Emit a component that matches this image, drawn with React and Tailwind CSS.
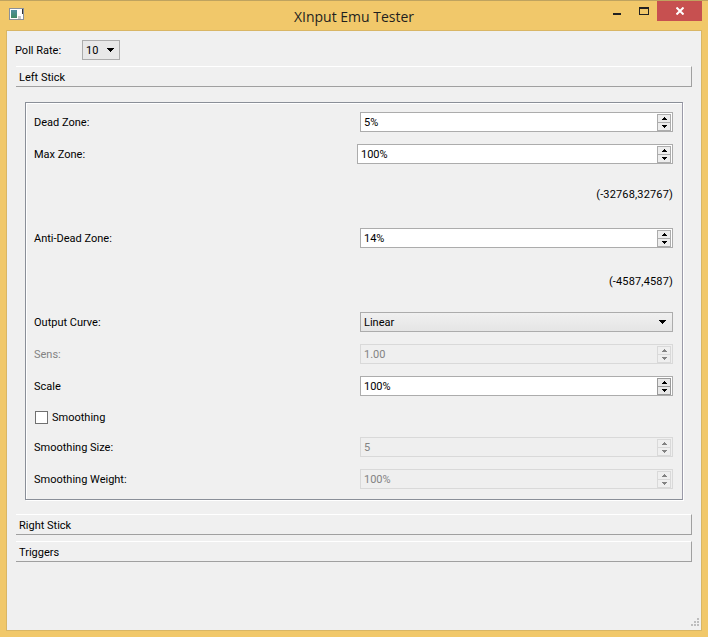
import React from 'react';

const font = { fontFamily: 'Roboto, "Liberation Sans", Arial, sans-serif' };

const Arrow = ({ className = "text-black" }) => (
    <svg width="7" height="4" viewBox="0 0 7 4" className={className} shapeRendering="crispEdges">
        <path d="M0 0h7v1H6v1H5v1H4v1H3V3H2V2H1V1H0z" fill="currentColor" />
    </svg>
);

const SpinArrow = ({ up, className }) => (
    <svg width="5" height="3" viewBox="0 0 5 3" className={className} shapeRendering="crispEdges">
        <path d={up ? "M2 0h1v1h1v1h1v1H0V2h1V1h1z" : "M0 0h5v1H4v1H3v1H2V2H1V1H0z"} fill="currentColor" />
    </svg>
);

const SpinBox = ({ value, disabled, wide, focused }) => (
    <div className={`flex h-5 items-center border ${wide ? 'w-[316px]' : 'w-[313px]'} ${disabled ? 'border-[#d9d9d9] bg-[#efefef] text-[#838383]' : 'border-[#acacac] bg-white text-black'}`}>
        <span className="flex-1 pl-[3px] pt-[3px] text-[11px]">{value}</span>
        <div className="mr-[1px] flex flex-col">
            {[true, false].map(up => (
                <div key={String(up)} className={`flex h-[9px] w-[14px] items-center justify-center border ${up ? '' : '-mt-[1px]'} ${disabled ? 'border-[#d9d9d9] bg-[#efefef]' : focused ? 'border-[#9a9a9a] bg-[#e8e8e8]' : 'border-[#acacac] bg-[#ededed]'}`}>
                    <SpinArrow up={up} className={disabled ? 'text-[#838383]' : 'text-black'} />
                </div>
            ))}
        </div>
    </div>
);

const Row = ({ label, disabled, className = "", children }) => (
    <div className={`flex h-5 items-center justify-between text-[11px] ${className}`}>
        <span className={`pt-[3px] ${disabled ? 'text-[#838383]' : 'text-black'}`}>{label}</span>
        {children}
    </div>
);

const SectionHeader = ({ title, className = "" }) => (
    <div className={`flex h-[21px] items-center border-t border-t-white border-b border-b-[#a0a0a0] border-r border-r-[#a0a0a0] pl-[3px] pt-[3px] text-[11px] text-black ${className}`}>
        {title}
    </div>
);

const App = () => {
    return (
        <div style={font} className="flex h-[637px] w-[708px] flex-col overflow-hidden border-t border-t-[#bfa35f] bg-[#f1c86a]">
            {/* title bar */}
            <div className="relative flex h-[29px] shrink-0 items-center justify-center">
                <div className="absolute left-[9px] top-[7px] flex h-[12px] w-[15px] items-center border border-[#8a9099] bg-white pl-[1px]">
                    <div className="h-[8px] w-[6px] bg-gradient-to-b from-[#4f8f9f] to-[#3f8a62]" />
                    <div className="ml-[1px] h-[3px] w-[3px] self-end bg-[#c9c9c9]" />
                    <div className="ml-[1px] h-[5px] w-[1px] self-start bg-[#333]" />
                </div>
                <span className="pt-[1px] text-[14px] text-[#1f1f1f]" style={{ fontFamily: '"Open Sans", sans-serif' }}>XInput Emu Tester</span>
                <div className="absolute right-[6px] top-0 flex h-5 items-start">
                    <div className="mr-[18px] mt-[12px] h-[2px] w-[8px] bg-[#222]" />
                    <div className="mr-[8px] mt-[6px] h-[8px] w-[10px] border border-t-[2px] border-[#222]" />
                    <div className="flex h-5 w-[45px] items-center justify-center bg-[#c75050]">
                        <svg width="8" height="8" viewBox="0 0 8 8" stroke="white" strokeWidth="2"><path d="M0.5 0.5l7 7M7.5 0.5l-7 7" /></svg>
                    </div>
                </div>
            </div>

            {/* client area */}
            <div className="relative mx-[6px] flex h-[601px] flex-col border border-[#d9b665] bg-[#f0f0f0] pl-[9px] pr-[9px] pt-[9px]">
                <div className="flex h-5 items-center text-[11px] text-black">
                    <span className="-ml-[1px] w-[67px] pt-[3px]">Poll Rate:</span>
                    <div className="flex h-5 w-[38px] items-center border border-[#acacac] bg-[#e8e8e8] pl-[3px]">
                        <span className="w-[21px] pt-[3px]">10</span>
                        <Arrow />
                    </div>
                </div>

                <SectionHeader title="Left Stick" className="mt-[6px]" />

                <div className="mx-[9px] mt-[15px] h-[398px] border border-[#8a8f98] border-r-[#9a9aa8] pl-2 pr-[9px] pt-[9px] shadow-[1px_1px_0_#fff,inset_1px_1px_0_#fff]">
                    <Row label="Dead Zone:"><SpinBox value="5%" /></Row>
                    <Row label="Max Zone:" className="mt-3"><SpinBox value="100%" wide /></Row>
                    <div className="mt-[21px] h-5 text-right text-[11px] leading-5 tracking-[0.15px] text-black">(-32768,32767)</div>
                    <Row label="Anti-Dead Zone:" className="mt-[23px]"><SpinBox value="14%" /></Row>
                    <div className="mt-[24px] h-5 text-right text-[11px] leading-5 tracking-[0.15px] text-black">(-4587,4587)</div>
                    <Row label="Output Curve:" className="mt-[20px]">
                        <div className="flex h-5 w-[313px] items-center justify-between border border-[#acacac] bg-gradient-to-b from-[#f0f0f0] to-[#e5e5e5] pl-[3px] pr-[6px]">
                            <span className="pt-[3px]">Linear</span>
                            <Arrow />
                        </div>
                    </Row>
                    <Row label="Sens:" disabled className="mt-3"><SpinBox value="1.00" disabled /></Row>
                    <Row label="Scale" className="mt-3"><SpinBox value="100%" focused /></Row>
                    <div className="mt-[11px] flex h-[20px] items-center text-[11px] text-black">
                        <div className="ml-[1px] h-[13px] w-[13px] border border-[#707070] bg-white" />
                        <span className="ml-[4px] pt-[2px]">Smoothing</span>
                    </div>
                    <Row label="Smoothing Size:" className="mt-[10px]"><SpinBox value="5" disabled /></Row>
                    <Row label="Smoothing Weight:" className="mt-3"><SpinBox value="100%" disabled /></Row>
                </div>

                <SectionHeader title="Right Stick" className="mt-[14px]" />
                <SectionHeader title="Triggers" className="mt-[6px]" />

                {/* size grip */}
                <svg width="11" height="11" viewBox="0 0 11 11" className="absolute bottom-[1px] right-[1px]" fill="#bdbdbd" shapeRendering="crispEdges">
                    <path d="M8 0h2v2H8zM5 3h2v2H5zM8 3h2v2H8zM2 6h2v2H2zM5 6h2v2H5zM8 6h2v2H8z" />
                </svg>
            </div>
        </div>
    );
};

export default App;
